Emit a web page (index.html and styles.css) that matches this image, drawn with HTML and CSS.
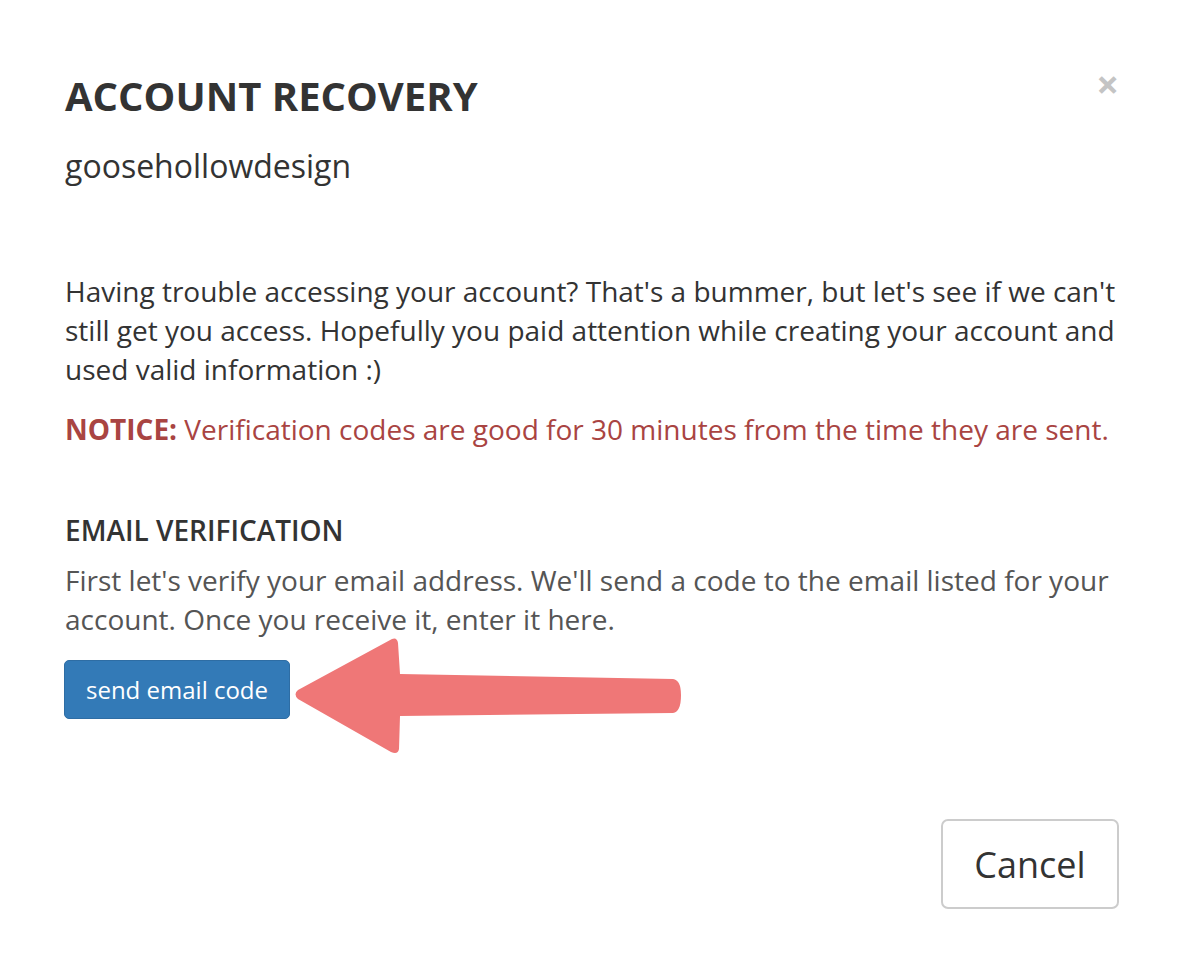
FILE: index.html
```html
<!DOCTYPE html>
<html lang="en">
<head>
    <meta charset="UTF-8">
    <meta name="viewport" content="width=device-width, initial-scale=1.0">
    <title>Account Recovery</title>
    <link rel="stylesheet" href="styles.css">
</head>
<body>
    <div class="modal">
        <div class="modal-header">
            <button class="close" type="button">&times;</button>
            <h1 class="modal-title">ACCOUNT RECOVERY</h1>
            <div class="username">goosehollowdesign</div>
        </div>
        <div class="modal-body">
            <p class="intro">Having trouble accessing your account? That's a bummer, but let's see if we can't still get you access. Hopefully you paid attention while creating your account and used valid information :)</p>
            <p class="notice"><strong>NOTICE:</strong> Verification codes are good for 30 minutes from the time they are sent.</p>

            <h2 class="step-title">EMAIL VERIFICATION</h2>
            <p class="step-text">First let's verify your email address. We'll send a code to the email listed for your account. Once you receive it, enter it here.</p>
            <div class="step-action">
                <button class="btn btn-primary" type="button">send email code</button>
                <svg class="arrow" width="400" height="120" viewBox="0 0 400 120">
                    <path d="M99 2 Q104 0 105 6 L107 37 L380 42 Q388 43 388 58 Q388 75 380 76 L107 79 L106 112 Q105 118 98 115 L5 62 Q0 57 5 53 Z" fill="#ef7777"/>
                </svg>
            </div>
        </div>
        <div class="modal-footer">
            <button class="btn btn-default" type="button">Cancel</button>
        </div>
    </div>
</body>
</html>
```

FILE: styles.css
```css
body {
    margin: 0;
    background: #fff;
    font-family: "Open Sans", "Liberation Sans", sans-serif;
    color: #333;
}
.modal {
    position: relative;
    padding: 72px 63px 60px 63px;
}
.modal-header {
    padding-left: 2px;
}
.close {
    position: absolute;
    top: 61px;
    right: 63px;
    padding: 0;
    border: none;
    background: none;
    font-family: "Open Sans", sans-serif;
    font-size: 40px;
    font-weight: 700;
    line-height: 46px;
    color: #c4c4c4;
    cursor: pointer;
}
.modal-title {
    margin: 0;
    font-size: 40px;
    line-height: 48px;
    font-weight: 700;
    color: #333;
}
.username {
    margin-top: 26px;
    font-size: 32px;
    line-height: 40px;
}
.modal-body {
    padding-left: 2px;
}
.modal-body p {
    margin: 0;
    font-size: 28px;
    line-height: 39px;
}
.intro {
    margin-top: 86px !important;
}
.notice {
    margin-top: 21px !important;
    color: #a94442;
}
.step-title {
    margin: 62px 0 0 0;
    font-size: 28px;
    line-height: 39px;
    font-weight: 600;
    color: #333;
}
.step-text {
    margin-top: 11px !important;
    color: #555;
}
.step-action {
    position: relative;
    margin-top: 21px;
    margin-left: -1px;
}
.arrow {
    position: absolute;
    left: 229px;
    top: -23px;
}
.btn {
    font-family: "Open Sans", "Liberation Sans", sans-serif;
    cursor: pointer;
}
.btn-primary {
    width: 226px;
    height: 59px;
    padding: 0;
    font-size: 24px;
    color: #fff;
    background: #337ab7;
    border: 1px solid #2e6da4;
    border-radius: 5px;
}
.modal-footer {
    display: flex;
    justify-content: flex-end;
    margin-top: 100px;
}
.btn-default {
    width: 178px;
    height: 90px;
    font-size: 36px;
    color: #333;
    background: #fff;
    border: 2px solid #ccc;
    border-radius: 7px;
}
```
